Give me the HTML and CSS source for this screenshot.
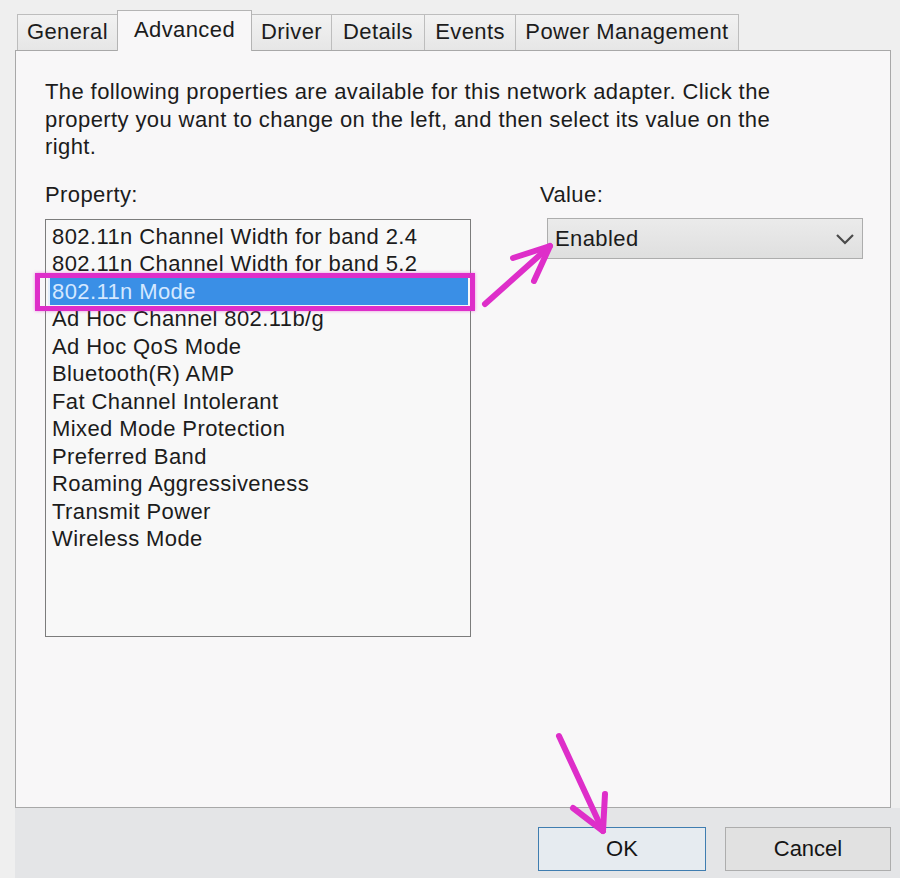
FILE: index.html
```html
<!DOCTYPE html>
<html lang="en">
<head>
    <meta charset="UTF-8">
    <title>Adapter Properties - Advanced</title>
    <link rel="stylesheet" href="styles.css">
</head>
<body>
    <div class="dialog">
        <div class="tabs">
            <div class="tab tab-general">General</div>
            <div class="tab tab-advanced active">Advanced</div>
            <div class="tab tab-driver">Driver</div>
            <div class="tab tab-details">Details</div>
            <div class="tab tab-events">Events</div>
            <div class="tab tab-power">Power Management</div>
        </div>

        <div class="panel">
            <p class="desc">The following properties are available for this network adapter. Click the property you want to change on the left, and then select its value on the right.</p>

            <div class="fields">
                <div class="prop-col">
                    <div class="label">Property:</div>
                    <ul class="listbox">
                        <li>802.11n Channel Width for band 2.4</li>
                        <li>802.11n Channel Width for band 5.2</li>
                        <li class="selected">802.11n Mode<span class="mark"></span></li>
                        <li>Ad Hoc Channel 802.11b/g</li>
                        <li>Ad Hoc QoS Mode</li>
                        <li>Bluetooth(R) AMP</li>
                        <li>Fat Channel Intolerant</li>
                        <li>Mixed Mode Protection</li>
                        <li>Preferred Band</li>
                        <li>Roaming Aggressiveness</li>
                        <li>Transmit Power</li>
                        <li>Wireless Mode</li>
                    </ul>
                </div>

                <div class="value-col">
                    <div class="label">Value:</div>
                    <div class="combo">
                        <span>Enabled</span>
                        <svg class="chevron" width="20" height="12" viewBox="0 0 20 12">
                            <polyline points="2,2 10,10 18,2" fill="none" stroke="#4a4a4a" stroke-width="2.2"/>
                        </svg>
                    </div>
                </div>
            </div>
        </div>

        <div class="footer">
            <button class="btn btn-ok">OK</button>
            <button class="btn btn-cancel">Cancel</button>
        </div>

        <!-- annotation arrows drawn over the dialog -->
        <svg class="annot" width="900" height="878" viewBox="0 0 900 878">
            <g fill="none" stroke="#de2ec9" stroke-width="6" stroke-linecap="round" stroke-linejoin="round">
                <line x1="485" y1="304" x2="550" y2="246"/>
                <polyline points="513,258 550,246 534,281"/>
                <line x1="559" y1="736" x2="603" y2="831"/>
                <polyline points="573,808 603,831 605,794"/>
            </g>
        </svg>
    </div>
</body>
</html>
```

FILE: styles.css
```css
body {
    margin: 0;
    padding: 0;
    background-color: #efefef;
    font-family: "Liberation Sans", Arial, sans-serif;
    color: #1c1c1c;
    letter-spacing: 0.4px;
    overflow: hidden;
}

.dialog {
    position: relative;
    width: 900px;
    height: 878px;
    display: flex;
    flex-direction: column;
}

.tabs {
    display: flex;
    align-items: flex-end;
    height: 50px;
    padding: 10px 0 0 17px;
    box-sizing: border-box;
}

.tab {
    height: 36px;
    line-height: 34px;
    font-size: 22px;
    text-align: center;
    box-sizing: border-box;
    border: 1px solid #bdbdbd;
    border-bottom: none;
    background: linear-gradient(#f2f2f2, #e6e6e6);
    margin-left: -1px;
    white-space: nowrap;
}

.tab-general { width: 101px; margin-left: 0; }
.tab-advanced { width: 135px; }
.tab-driver { width: 81px; }
.tab-details { width: 94px; }
.tab-events { width: 92px; }
.tab-power { width: 224px; }

.tab.active {
    height: 41px;
    line-height: 38px;
    margin-bottom: -1px;
    background: #f8f7f8;
    border-color: #b4b4b4;
    position: relative;
    z-index: 1;
}

.panel {
    margin-left: 15px;
    width: 876px;
    height: 758px;
    box-sizing: border-box;
    border: 1px solid #a8a8a8;
    background-color: #f8f7f8;
    padding: 27px 0 0 29px;
}

.desc {
    margin: 0;
    width: 745px;
    font-size: 22px;
    line-height: 27.5px;
}

.fields {
    display: flex;
    margin-top: 20px;
}

.label {
    font-size: 22px;
    line-height: 27.5px;
}

.prop-col {
    width: 426px;
}

.listbox {
    list-style: none;
    margin: 11px 0 0 0;
    padding: 3px 2px 0 2px;
    width: 426px;
    height: 418px;
    box-sizing: border-box;
    border: 1px solid #7c7c7c;
    background-color: #f8f8f8;
}

.listbox li {
    font-size: 22px;
    line-height: 27.45px;
    padding-left: 4px;
    white-space: nowrap;
}

.listbox li.selected {
    position: relative;
    background-color: #3a8fe6;
    color: #d4e8ff;
    border-left: 2px solid #e4f0fc;
    padding-left: 2px;
}

.mark {
    position: absolute;
    left: -15px;
    top: -5px;
    right: -7px;
    bottom: -6px;
    border: 5px solid #de2ec9;
    box-shadow: 0 0 3px rgba(222, 46, 201, 0.5);
    pointer-events: none;
}

.value-col {
    margin-left: 69px;
}

.combo {
    margin: 10px 0 0 7px;
    width: 316px;
    height: 41px;
    box-sizing: border-box;
    border: 1px solid #adadad;
    background: linear-gradient(#ebebeb, #dfdfdf);
    display: flex;
    align-items: center;
    justify-content: space-between;
    padding: 0 6px 0 7px;
    font-size: 22px;
}

.chevron {
    margin-right: 1px;
}

.footer {
    flex: 1;
    margin-left: 15px;
    background-color: #e4e5e7;
    display: flex;
    justify-content: flex-end;
    align-items: flex-start;
    gap: 19px;
    padding: 19px 9px 0 0;
}

.btn {
    height: 44px;
    font-family: "Liberation Sans", Arial, sans-serif;
    font-size: 22px;
    color: #151515;
    cursor: pointer;
}

.btn-ok {
    width: 168px;
    border: 1px solid #3f7db0;
    background-color: #e6ebf0;
}

.btn-cancel {
    width: 166px;
    border: 1px solid #adadad;
    background-color: #e1e1e1;
}

.annot {
    position: absolute;
    left: 0;
    top: 0;
    pointer-events: none;
}
```
